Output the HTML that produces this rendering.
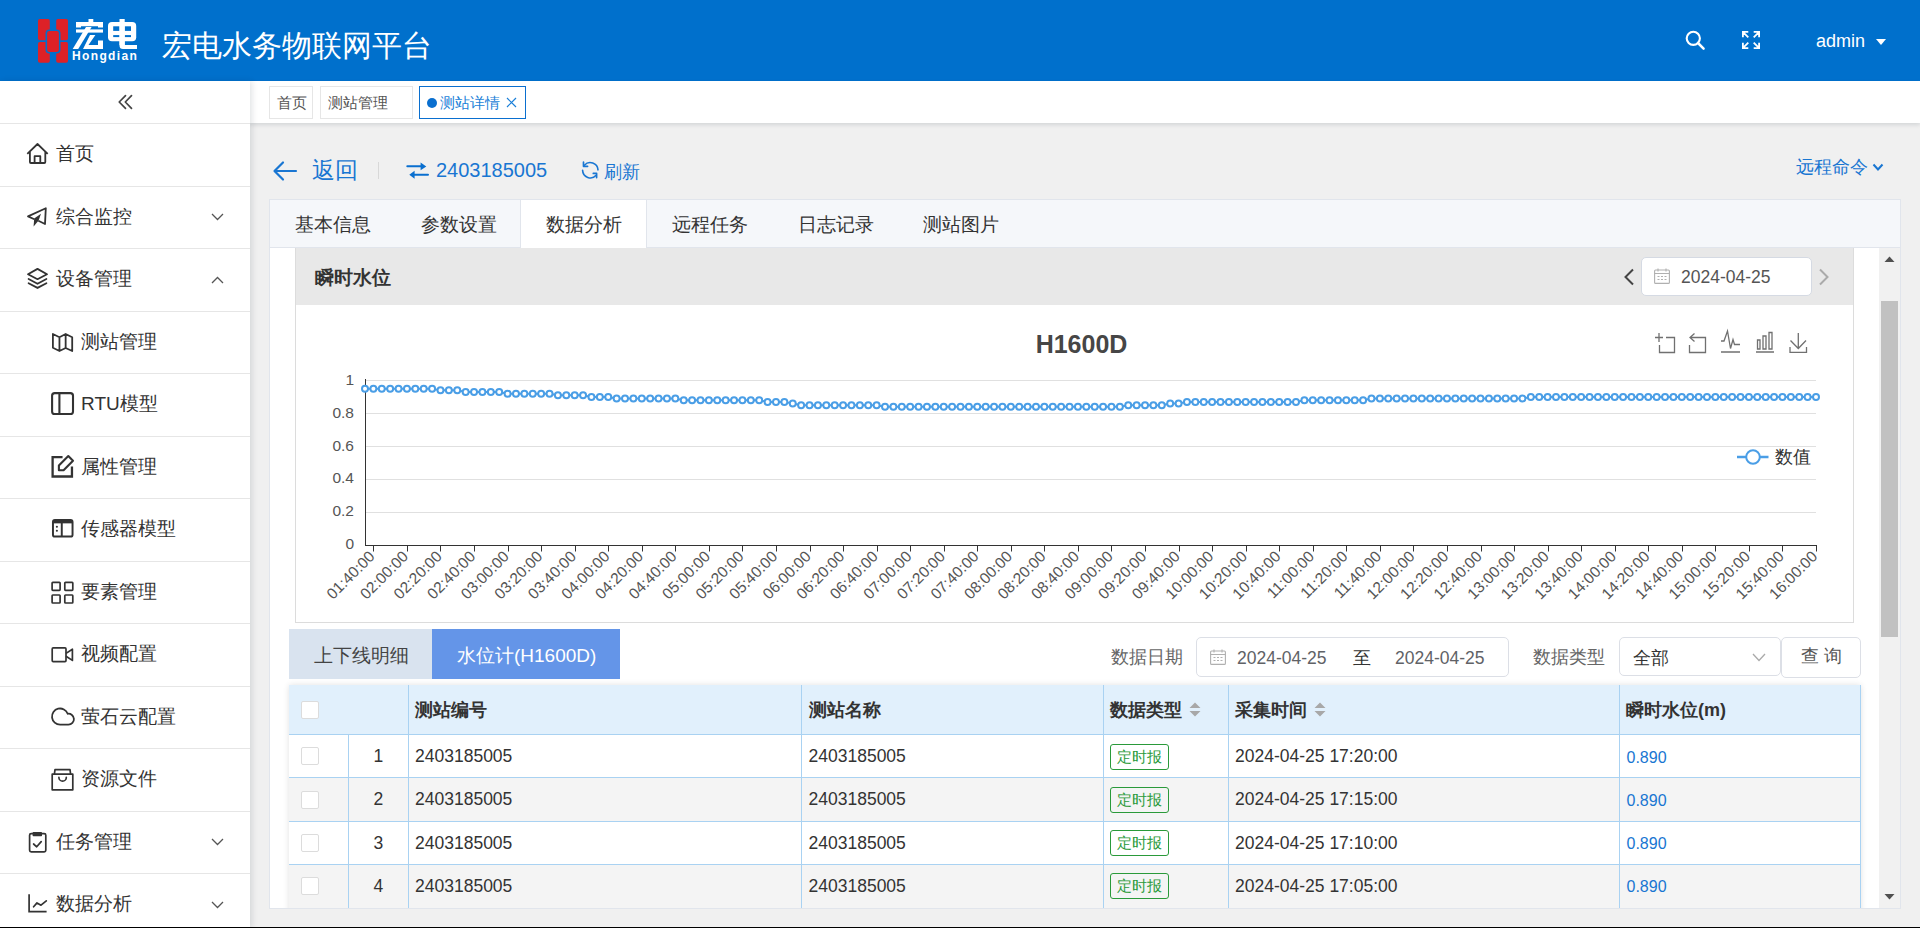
<!DOCTYPE html>
<html><head><meta charset="utf-8">
<style>
*{box-sizing:border-box;margin:0;padding:0}
html,body{width:1920px;height:928px;overflow:hidden;font-family:"Liberation Sans",sans-serif;color:#333;background:#f0f0f0}
.abs{position:absolute}
#hdr{position:absolute;left:0;top:0;width:1920px;height:81px;background:#0070cc}
#side{position:absolute;left:0;top:81px;width:250px;height:847px;background:#fff;box-shadow:2px 0 6px rgba(0,21,41,.12);z-index:3}
.mi{position:absolute;left:0;width:250px;height:62.5px;border-top:1px solid #e6e6e6;font-size:19px;color:#333}
.mi span{position:absolute;top:18px;line-height:24px;white-space:nowrap}
.mi svg{position:absolute}
#tabs{position:absolute;left:250px;top:81px;width:1670px;height:42px;background:#fff;box-shadow:0 2px 4px rgba(0,21,41,.12);z-index:2}
.tg{position:absolute;top:5px;height:33px;border:1px solid #e6e6e6;font-size:15px;line-height:31px;color:#555;padding-left:7px;white-space:nowrap}

#main{position:absolute;left:250px;top:123px;width:1670px;height:805px;background:#f0f0f0}
.blue{color:#1976d2}
#card{position:absolute;left:269px;top:199px;width:1632px;height:710px;border:1px solid #e1e5ec;background:#fff;overflow:hidden}
#thead{position:absolute;left:0;top:0;width:1630px;height:48px;background:#f5f7fa;border-bottom:1px solid #e1e5ec}
.tb{position:absolute;top:12.8px;font-size:19px;line-height:24px;color:#333;white-space:nowrap}
#scroll{position:absolute;left:0;top:48px;width:1630px;height:660px;overflow:hidden;background:#fff}
.t{position:absolute;white-space:nowrap}
</style></head><body>
<div id="hdr">
  <svg class="abs" style="left:36px;top:17px" width="104" height="48" viewBox="36 17 104 48">
    <g fill="#dd2127">
    <rect x="38" y="19" width="11.8" height="21.2" rx="1.8"/>
    <rect x="56.2" y="19" width="11.8" height="21.2" rx="1.8"/>
    <rect x="38" y="41.9" width="11.8" height="20.9" rx="1.8"/>
    <rect x="56.2" y="41.9" width="11.8" height="20.9" rx="1.8"/>
    <rect x="46.3" y="30.2" width="13.4" height="22.6" rx="3" stroke="#0070cc" stroke-width="1.6"/>
    </g>
    <g fill="#fff">
    <rect x="88.5" y="19" width="4.8" height="4.5"/>
    <path d="M76 22 H103 V27.5 H98 V26.3 H81 V27.5 H76 Z"/>
    <rect x="76" y="29.4" width="27" height="3.2"/>
    <path d="M86 27 H91.6 L78.2 49 H72.7 Z"/>
    <path d="M90 35 H95.4 L88.5 45 H103 V49 H83 Z"/>
    <rect x="98" y="40.5" width="5" height="8.5"/>
    <rect x="108" y="22" width="28.2" height="19.2" rx="4"/>
    <rect x="113.2" y="26.3" width="6.3" height="4.6" fill="#0070cc"/>
    <rect x="124.7" y="26.3" width="6.3" height="4.6" fill="#0070cc"/>
    <rect x="113.2" y="35.1" width="6.3" height="2" fill="#0070cc"/>
    <rect x="124.7" y="35.1" width="6.3" height="2" fill="#0070cc"/>
    <rect x="119.5" y="19" width="5.2" height="26"/>
    <path d="M119.5 40 V45.5 Q119.5 49 123 49 H137 V45 H124.7 V40 Z"/>
    </g>
  </svg>
  <div class="abs" style="left:72px;top:49px;font-size:12px;line-height:14px;color:#fff;letter-spacing:1.35px;font-weight:bold">Hongdian</div>
  <div class="abs" style="left:161.8px;top:26.8px;font-size:30.3px;line-height:38px;color:#fff;white-space:nowrap">宏电水务物联网平台</div>
  <svg class="abs" style="left:1685px;top:30px" width="21" height="21" viewBox="0 0 21 21"><circle cx="8.3" cy="8.3" r="6.6" fill="none" stroke="#fff" stroke-width="2.1"/><path d="M13 13 L18.6 18.6" stroke="#fff" stroke-width="2.5" stroke-linecap="round"/></svg>
  <svg class="abs" style="left:1742px;top:31px" width="18" height="18" viewBox="0 0 20 20" fill="none" stroke="#fff" stroke-width="2"><path d="M1 7V1h6M13 1h6v6M19 13v6h-6M7 19H1v-6M2 2l5 5M18 2l-5 5M18 18l-5-5M2 18l5-5"/></svg>
  <div class="abs" style="left:1816px;top:30px;font-size:18px;line-height:22px;color:#fff">admin</div>
  <svg class="abs" style="left:1876px;top:39px" width="10" height="7" viewBox="0 0 10 7"><path d="M0 0h10L5 6z" fill="#fff"/></svg>
</div>

<div id="side">
  <svg class="abs" style="left:116px;top:11px" width="20" height="18" viewBox="116 92 20 18"><path d="M125.5 95.6 L119.2 102 L125.5 108.3 M131.5 95.6 L125.3 102 L131.5 108.3" fill="none" stroke="#444" stroke-width="1.7" stroke-linecap="round" stroke-linejoin="round"/></svg>
<div class="mi" style="top:42.0px"><svg style="left:22px;top:14.2px" width="30" height="30" viewBox="22 138 30 30"><path d="M27.3 153.8 L37.5 144 L47.7 153.8 M29.9 151.3 V162 Q29.9 163 30.9 163 H44.3 Q45.3 163 45.3 162 V151.3 M34.6 163 V156.2 H40.3 V163" fill="none" stroke="#333" stroke-width="1.8" stroke-linejoin="round"/></svg><span style="left:56px">首页</span></div>
<div class="mi" style="top:104.5px"><svg style="left:22px;top:13.8px" width="30" height="30" viewBox="22 200 30 30"><path d="M34.3 219.2 L28 216.4 L45.8 208.2 L45 224 L38.4 220.7" fill="none" stroke="#333" stroke-width="1.8" stroke-linejoin="round"/><path d="M34.2 218.6 L41 213.8 L38.6 220.4 L33.6 226.6 Z" fill="#333"/></svg><span style="left:56px">综合监控</span><svg style="left:211px;top:26.5px" width="13" height="8" viewBox="0 0 13 8"><path d="M1 1 L6.5 6.5 L12 1" fill="none" stroke="#555" stroke-width="1.3"/></svg></div>
<div class="mi" style="top:167.0px"><svg style="left:22px;top:14px" width="30" height="30" viewBox="22 263 30 30"><path d="M37.5 268.9 L47 274.2 L37.5 279.2 L28 274.2 Z" fill="none" stroke="#333" stroke-width="1.8" stroke-linejoin="round"/><path d="M28.6 279 L37.5 283.7 L46.4 279 M28.6 283.2 L37.5 287.9 L46.4 283.2" fill="none" stroke="#333" stroke-width="1.8" stroke-linecap="round"/></svg><span style="left:56px">设备管理</span><svg style="left:211px;top:27px" width="13" height="8" viewBox="0 0 13 8"><path d="M1 7 L6.5 1.5 L12 7" fill="none" stroke="#555" stroke-width="1.3"/></svg></div>
<div class="mi" style="top:229.5px"><svg style="left:46px;top:15.5px" width="32" height="32" viewBox="46 326 32 32"><path d="M52.9 333 L59.45 336.2 L65.65 333 L72.2 336.2 V350 L65.65 347 L59.45 350 L52.9 346.8 Z M59.45 336.2 V350 M65.65 333 V347" fill="none" stroke="#333" stroke-width="1.8" stroke-linejoin="round"/></svg><span style="left:81px">测站管理</span></div>
<div class="mi" style="top:292.0px"><svg style="left:49.7px;top:17.4px" width="25.1" height="25.1" viewBox="0 0 24 24"><rect x="2" y="2" width="20" height="20" rx="2.5" fill="none" stroke="#333" stroke-width="2"/><path d="M9 2 V22" stroke="#333" stroke-width="2"/></svg><span style="left:81px">RTU模型</span></div>
<div class="mi" style="top:354.5px"><svg style="left:49.7px;top:17.9px" width="25.1" height="25.1" viewBox="0 0 24 24"><path d="M12 3 H2.5 V21.5 H21 V12" fill="none" stroke="#333" stroke-width="2.2"/><path d="M17.5 2 L22 6.5 L13 15.5 H8.5 V11 Z" fill="none" stroke="#333" stroke-width="2" stroke-linejoin="round"/></svg><span style="left:81px">属性管理</span></div>
<div class="mi" style="top:417.0px"><svg style="left:50.5px;top:17.5px" width="23.5" height="23.5" viewBox="0 0 24 24"><rect x="2" y="3" width="20" height="17" rx="2" fill="none" stroke="#333" stroke-width="2"/><path d="M2 5 H22" stroke="#333" stroke-width="3"/><path d="M11 4 V20" stroke="#333" stroke-width="2"/><circle cx="6" cy="10" r="1.1" fill="#333"/><circle cx="6" cy="14" r="1.1" fill="#333"/></svg><span style="left:81px">传感器模型</span></div>
<div class="mi" style="top:479.5px"><svg style="left:46px;top:15.5px" width="32" height="32" viewBox="46 576 32 32"><g fill="none" stroke="#333" stroke-width="1.7"><rect x="52.1" y="581.3" width="8" height="8" rx="0.7"/><rect x="64.8" y="581.3" width="8" height="8" rx="0.7"/><rect x="52.1" y="594" width="8" height="8" rx="0.7"/><rect x="64.8" y="594" width="8" height="8" rx="0.7"/></g></svg><span style="left:81px">要素管理</span></div>
<div class="mi" style="top:542.0px"><svg style="left:46px;top:15px" width="32" height="32" viewBox="46 638 32 32"><g fill="none" stroke="#333" stroke-width="1.7" stroke-linejoin="round"><rect x="52.2" y="646.9" width="13.8" height="13.7" rx="1"/><path d="M66 652.4 L72.4 648.2 V659.4 L66 655.2"/></g></svg><span style="left:81px">视频配置</span></div>
<div class="mi" style="top:604.5px"><svg style="left:45px;top:13.5px" width="35" height="35" viewBox="45 700 35 35"><path d="M60.1 724.7 A8.1 8.1 0 1 1 67.68 713.75 A5.5 5.5 0 1 1 68.4 724.7 Z" fill="none" stroke="#333" stroke-width="1.8" stroke-linejoin="round"/></svg><span style="left:81px">萤石云配置</span></div>
<div class="mi" style="top:667.0px"><svg style="left:46px;top:15px" width="32" height="32" viewBox="46 763 32 32"><g fill="none" stroke="#333" stroke-width="1.7" stroke-linejoin="round"><path d="M52.2 773.2 H72.8 V788.8 H52.2 Z M54.4 773.2 L55 768.6 H70 L70.6 773.2"/><path d="M58.9 776.4 A3.7 3.7 0 0 0 66.3 776.4" stroke-linecap="round"/></g></svg><span style="left:81px">资源文件</span></div>
<div class="mi" style="top:729.5px"><svg style="left:22px;top:14.5px" width="30" height="30" viewBox="22 825 30 30"><rect x="29.6" y="832.6" width="16.2" height="18.2" rx="1.6" fill="none" stroke="#333" stroke-width="1.7"/><rect x="32.6" y="831" width="9.4" height="4.3" rx="0.8" fill="#333"/><path d="M33.6 843 L36.7 845.8 L41.2 840.6" fill="none" stroke="#333" stroke-width="1.7" stroke-linecap="round" stroke-linejoin="round"/></svg><span style="left:56px">任务管理</span><svg style="left:211px;top:26.5px" width="13" height="8" viewBox="0 0 13 8"><path d="M1 1 L6.5 6.5 L12 1" fill="none" stroke="#555" stroke-width="1.3"/></svg></div>
<div class="mi" style="top:792.0px"><svg style="left:22px;top:13.7px" width="30" height="30" viewBox="22 888 30 30"><path d="M29.1 894.2 V911.6 H46.6" fill="none" stroke="#333" stroke-width="1.7"/><path d="M33.6 906.8 L37 902.9 L41 905.2 L46.3 900.8" fill="none" stroke="#333" stroke-width="1.7" stroke-linecap="round" stroke-linejoin="round"/></svg><span style="left:56px">数据分析</span><svg style="left:211px;top:26.5px" width="13" height="8" viewBox="0 0 13 8"><path d="M1 1 L6.5 6.5 L12 1" fill="none" stroke="#555" stroke-width="1.3"/></svg></div>
</div>

<div id="tabs">
<div class="tg" style="left:19px;width:44px">首页</div>
  <div class="tg" style="left:70px;width:93px">测站管理</div>
  <div class="tg" style="left:169px;width:107px;border:1.6px solid #0a6fcf;color:#1a7fd8;padding-left:0">
    <div class="abs" style="left:7px;top:10.5px;width:10px;height:10px;border-radius:50%;background:#0a6fcf"></div>
    <span class="abs" style="left:19.5px;top:0">测站详情</span>
    <svg class="abs" style="left:86px;top:9.5px" width="11" height="11" viewBox="0 0 11 11"><path d="M1 1 L10 10 M10 1 L1 10" stroke="#1a7fd8" stroke-width="1.2"/></svg>
  </div>
</div>


<div id="main"></div>
<svg class="abs" style="left:272px;top:160px" width="26" height="22" viewBox="0 0 26 22"><path d="M24 11 H3 M11 2.5 L2.5 11 L11 19.5" fill="none" stroke="#1976d2" stroke-width="2.2" stroke-linecap="round" stroke-linejoin="round"/></svg>
<div class="t blue" style="left:312px;top:155px;font-size:23px;line-height:30px">返回</div>
<div class="abs" style="left:378px;top:162px;width:1px;height:17px;background:#d8d8d8"></div>
<svg class="abs" style="left:404px;top:158px" width="28" height="26" viewBox="404 158 28 26"><path d="M407.3 166.3 H421.5 M414 174.8 H428" stroke="#0a6fcf" stroke-width="2" stroke-linecap="round"/><path d="M420.6 162.5 L426.3 166.4 L420.6 170.2 Z M414.6 170.8 L409.3 174.7 L414.6 178.8 Z" fill="#0a6fcf"/></svg>
<div class="t blue" style="left:436px;top:158px;font-size:20px;line-height:24px">2403185005</div>
<svg class="abs" style="left:578px;top:158px" width="24" height="24" viewBox="578 158 24 24"><path d="M598 169.9 A7.8 7.8 0 0 0 584.4 165.2 M582.6 170.4 A7.8 7.8 0 0 0 596.2 175.3" fill="none" stroke="#1976d2" stroke-width="1.6" stroke-linecap="round"/><path d="M583.5 162.2 V166.3 H587.6 M593.3 173.4 H596.6 V177.6" fill="none" stroke="#1976d2" stroke-width="1.7" stroke-linecap="round" stroke-linejoin="round"/></svg>
<div class="t blue" style="left:604px;top:160px;font-size:18px;line-height:24px">刷新</div>
<div class="t blue" style="left:1796px;top:155px;font-size:18px;line-height:24px">远程命令</div>
<svg class="abs" style="left:1872px;top:163px" width="12" height="9" viewBox="0 0 12 9"><path d="M1.5 1.5 L6 6.5 L10.5 1.5" fill="none" stroke="#1976d2" stroke-width="2"/></svg>

<div id="card">
  <div id="thead">
    <div class="abs" style="left:250px;top:0;width:127px;height:49px;background:#fff;border-left:1px solid #e1e5ec;border-right:1px solid #e1e5ec"></div>
    <div class="tb" style="left:25px">基本信息</div>
    <div class="tb" style="left:151px">参数设置</div>
    <div class="tb" style="left:276px">数据分析</div>
    <div class="tb" style="left:402px">远程任务</div>
    <div class="tb" style="left:528px">日志记录</div>
    <div class="tb" style="left:653px">测站图片</div>
  </div>
  <div id="scroll">
    <div class="abs" style="left:25px;top:0;width:1559px;height:375px;border:1px solid #dcdcdc;border-top:0;background:#fff"></div>
<div class="abs" style="left:25px;top:0;width:1559px;height:57px;background:#e8e8e8;border-left:1px solid #dcdcdc;border-right:1px solid #dcdcdc"></div>
<div class="t" style="left:45px;top:18px;font-size:19px;line-height:24px;font-weight:bold;color:#333">瞬时水位</div>
<svg class="abs" style="left:1352px;top:20px" width="14" height="18" viewBox="0 0 14 18"><path d="M11 1.5 L3.5 9 L11 16.5" fill="none" stroke="#444" stroke-width="2"/></svg>
<div class="abs" style="left:1371px;top:8.5px;width:170.5px;height:39px;background:#fff;border:1px solid #d5dae3;border-radius:5px"></div>
<svg class="abs" style="left:1384px;top:20px" width="16" height="16" viewBox="0 0 16 16" fill="none" stroke="#b0b0b0" stroke-width="1.1"><rect x="0.6" y="2" width="14.8" height="13.4" rx="1"/><path d="M0.6 5.5 H15.4 M4 0.5 V3.5 M12 0.5 V3.5"/><path d="M3.5 8.5h2M7 8.5h2M10.5 8.5h2M3.5 11.5h2M7 11.5h2M10.5 11.5h2" stroke-width="1"/></svg>
<div class="t" style="left:1411px;top:17.5px;font-size:17.5px;line-height:22px;color:#555">2024-04-25</div>
<svg class="abs" style="left:1547px;top:20px" width="14" height="18" viewBox="0 0 14 18"><path d="M3 1.5 L10.5 9 L3 16.5" fill="none" stroke="#aaa" stroke-width="2"/></svg>

<!-- sub tabs -->
<div class="abs" style="left:19px;top:381px;width:143px;height:50px;background:#d9e3ef"></div>
<div class="t" style="left:44px;top:396px;font-size:19px;line-height:24px;color:#444">上下线明细</div>
<div class="abs" style="left:162px;top:381px;width:188px;height:50px;background:#6495e8"></div>
<div class="t" style="left:187px;top:396px;font-size:19px;line-height:24px;color:#fff">水位计(H1600D)</div>

<div class="t" style="left:841px;top:398px;font-size:18px;line-height:22px;color:#666">数据日期</div>
<div class="abs" style="left:926px;top:389px;width:313px;height:40px;border:1px solid #dcdfe6;border-radius:5px;background:#fff"></div>
<svg class="abs" style="left:940px;top:401px" width="16" height="16" viewBox="0 0 16 16" fill="none" stroke="#b0b0b0" stroke-width="1.1"><rect x="0.6" y="2" width="14.8" height="13.4" rx="1"/><path d="M0.6 5.5 H15.4 M4 0.5 V3.5 M12 0.5 V3.5"/><path d="M3.5 8.5h2M7 8.5h2M10.5 8.5h2M3.5 11.5h2M7 11.5h2M10.5 11.5h2" stroke-width="1"/></svg>
<div class="t" style="left:967px;top:398.5px;font-size:17.5px;line-height:22px;color:#606266">2024-04-25</div>
<div class="t" style="left:1082.5px;top:399px;font-size:18px;line-height:22px;color:#333">至</div>
<div class="t" style="left:1125px;top:398.5px;font-size:17.5px;line-height:22px;color:#606266">2024-04-25</div>
<div class="t" style="left:1263px;top:398px;font-size:18px;line-height:22px;color:#666">数据类型</div>
<div class="abs" style="left:1349px;top:389px;width:162px;height:39px;border:1px solid #dcdfe6;border-radius:5px;background:#fff"></div>
<div class="t" style="left:1362.5px;top:399px;font-size:18px;line-height:22px;color:#333">全部</div>
<svg class="abs" style="left:1482px;top:405px" width="14" height="9" viewBox="0 0 14 9"><path d="M1 1 L7 7.5 L13 1" fill="none" stroke="#aaa" stroke-width="1.3"/></svg>
<div class="abs" style="left:1511px;top:389px;width:80px;height:41px;border:1px solid #dcdfe6;border-radius:5px;background:#fff"></div>
<div class="t" style="left:1531px;top:397px;font-size:18px;line-height:22px;color:#555">查 询</div>

<!-- table -->
<div id="tbl" class="abs" style="left:19px;top:437px;width:1572px;height:240px;box-shadow:0 0 6px rgba(0,0,0,.12);background:#fff;overflow:hidden">
<div class="abs" style="left:0;top:0;width:1572px;height:50px;background:#e1f0fc;border-bottom:1px solid #a9d2f2"></div>
<div class="abs" style="left:0;top:50.0px;width:1572px;height:43.3px;background:#fff;border-bottom:1px solid #a9d2f2"></div>
<div class="abs" style="left:0;top:93.3px;width:1572px;height:43.3px;background:#f4f4f4;border-bottom:1px solid #a9d2f2"></div>
<div class="abs" style="left:0;top:136.6px;width:1572px;height:43.3px;background:#fff;border-bottom:1px solid #a9d2f2"></div>
<div class="abs" style="left:0;top:179.9px;width:1572px;height:60px;background:#f4f4f4"></div>
<div class="abs" style="left:59.0px;top:50px;width:1px;height:240px;background:#a9d2f2"></div>
<div class="abs" style="left:119.0px;top:0px;width:1px;height:240px;background:#a9d2f2"></div>
<div class="abs" style="left:512.0px;top:0px;width:1px;height:240px;background:#a9d2f2"></div>
<div class="abs" style="left:814.0px;top:0px;width:1px;height:240px;background:#a9d2f2"></div>
<div class="abs" style="left:939.0px;top:0px;width:1px;height:240px;background:#a9d2f2"></div>
<div class="abs" style="left:1330.0px;top:0px;width:1px;height:240px;background:#a9d2f2"></div>
<div class="abs" style="left:1571px;top:0;width:1px;height:240px;background:#a9d2f2"></div>
<div class="abs" style="left:12px;top:16px;width:18px;height:18px;background:#fff;border:1px solid #dcdcdc;border-radius:2px"></div>
<div class="t" style="left:126px;top:13px;font-size:18px;line-height:24px;font-weight:bold;color:#333">测站编号</div>
<div class="t" style="left:520px;top:13px;font-size:18px;line-height:24px;font-weight:bold;color:#333">测站名称</div>
<div class="t" style="left:821px;top:13px;font-size:18px;line-height:24px;font-weight:bold;color:#333">数据类型</div>
<div class="t" style="left:946px;top:13px;font-size:18px;line-height:24px;font-weight:bold;color:#333">采集时间</div>
<div class="t" style="left:1337px;top:13px;font-size:18px;line-height:24px;font-weight:bold;color:#333">瞬时水位(m)</div>
<svg class="abs" style="left:900px;top:17px" width="12" height="15" viewBox="0 0 12 15"><path d="M6 0.5 L11.5 6 H0.5 Z M0.5 9 H11.5 L6 14.5 Z" fill="#a8a8a8"/></svg>
<svg class="abs" style="left:1024.5px;top:17px" width="12" height="15" viewBox="0 0 12 15"><path d="M6 0.5 L11.5 6 H0.5 Z M0.5 9 H11.5 L6 14.5 Z" fill="#a8a8a8"/></svg>
<div class="abs" style="left:12px;top:62px;width:18px;height:18px;background:#fff;border:1px solid #dcdcdc;border-radius:2px"></div>
<div class="t" style="left:84.5px;top:60.0px;font-size:17.5px;line-height:22px;color:#333">1</div>
<div class="t" style="left:126px;top:60.0px;font-size:17.5px;line-height:22px;color:#333">2403185005</div>
<div class="t" style="left:519.5px;top:60.0px;font-size:17.5px;line-height:22px;color:#333">2403185005</div>
<div class="abs" style="left:821px;top:58.5px;width:59px;height:26px;border:1px solid #2a9a3a;border-radius:3px;font-size:14.5px;line-height:24px;color:#2a9a3a;text-align:center">定时报</div>
<div class="t" style="left:946px;top:60.0px;font-size:17.5px;line-height:22px;color:#333">2024-04-25 17:20:00</div>
<div class="t" style="left:1337.5px;top:62.5px;font-size:16px;line-height:20px;color:#1976d2">0.890</div>
<div class="abs" style="left:12px;top:106px;width:18px;height:18px;background:#fff;border:1px solid #dcdcdc;border-radius:2px"></div>
<div class="t" style="left:84.5px;top:103.3px;font-size:17.5px;line-height:22px;color:#333">2</div>
<div class="t" style="left:126px;top:103.3px;font-size:17.5px;line-height:22px;color:#333">2403185005</div>
<div class="t" style="left:519.5px;top:103.3px;font-size:17.5px;line-height:22px;color:#333">2403185005</div>
<div class="abs" style="left:821px;top:101.8px;width:59px;height:26px;border:1px solid #2a9a3a;border-radius:3px;font-size:14.5px;line-height:24px;color:#2a9a3a;text-align:center">定时报</div>
<div class="t" style="left:946px;top:103.3px;font-size:17.5px;line-height:22px;color:#333">2024-04-25 17:15:00</div>
<div class="t" style="left:1337.5px;top:105.8px;font-size:16px;line-height:20px;color:#1976d2">0.890</div>
<div class="abs" style="left:12px;top:149px;width:18px;height:18px;background:#fff;border:1px solid #dcdcdc;border-radius:2px"></div>
<div class="t" style="left:84.5px;top:146.6px;font-size:17.5px;line-height:22px;color:#333">3</div>
<div class="t" style="left:126px;top:146.6px;font-size:17.5px;line-height:22px;color:#333">2403185005</div>
<div class="t" style="left:519.5px;top:146.6px;font-size:17.5px;line-height:22px;color:#333">2403185005</div>
<div class="abs" style="left:821px;top:145.1px;width:59px;height:26px;border:1px solid #2a9a3a;border-radius:3px;font-size:14.5px;line-height:24px;color:#2a9a3a;text-align:center">定时报</div>
<div class="t" style="left:946px;top:146.6px;font-size:17.5px;line-height:22px;color:#333">2024-04-25 17:10:00</div>
<div class="t" style="left:1337.5px;top:149.1px;font-size:16px;line-height:20px;color:#1976d2">0.890</div>
<div class="abs" style="left:12px;top:192px;width:18px;height:18px;background:#fff;border:1px solid #dcdcdc;border-radius:2px"></div>
<div class="t" style="left:84.5px;top:189.9px;font-size:17.5px;line-height:22px;color:#333">4</div>
<div class="t" style="left:126px;top:189.9px;font-size:17.5px;line-height:22px;color:#333">2403185005</div>
<div class="t" style="left:519.5px;top:189.9px;font-size:17.5px;line-height:22px;color:#333">2403185005</div>
<div class="abs" style="left:821px;top:188.4px;width:59px;height:26px;border:1px solid #2a9a3a;border-radius:3px;font-size:14.5px;line-height:24px;color:#2a9a3a;text-align:center">定时报</div>
<div class="t" style="left:946px;top:189.9px;font-size:17.5px;line-height:22px;color:#333">2024-04-25 17:05:00</div>
<div class="t" style="left:1337.5px;top:192.4px;font-size:16px;line-height:20px;color:#1976d2">0.890</div>
</div>

<!-- scrollbar -->
<div class="abs" style="left:1609px;top:0;width:21px;height:660px;background:#f1f1f1"></div>
<svg class="abs" style="left:1614px;top:8px" width="11" height="7" viewBox="0 0 11 7"><path d="M0.5 6 L5.5 0.5 L10.5 6 Z" fill="#505050"/></svg>
<div class="abs" style="left:1611px;top:53px;width:17px;height:336px;background:#c1c1c1"></div>
<svg class="abs" style="left:1614px;top:645px" width="11" height="7" viewBox="0 0 11 7"><path d="M0.5 1 L5.5 6.5 L10.5 1 Z" fill="#505050"/></svg>

  </div>
</div>
<div class="abs" style="left:0;top:927px;width:1920px;height:1px;background:#000;z-index:9"></div>
<!--CHART-->
<svg class="abs" style="left:296px;top:305px" width="1557" height="317" viewBox="296 305 1557 317">
<text x="1081.5" y="353" text-anchor="middle" font-family="Liberation Sans" font-weight="bold" font-size="25" fill="#464646">H1600D</text>
<line x1="365" x2="1816" y1="512.5" y2="512.5" stroke="#e0e0e0" stroke-width="1"/>
<line x1="365" x2="1816" y1="479.5" y2="479.5" stroke="#e0e0e0" stroke-width="1"/>
<line x1="365" x2="1816" y1="446.5" y2="446.5" stroke="#e0e0e0" stroke-width="1"/>
<line x1="365" x2="1816" y1="413.5" y2="413.5" stroke="#e0e0e0" stroke-width="1"/>
<line x1="365" x2="1816" y1="380.5" y2="380.5" stroke="#e0e0e0" stroke-width="1"/>
<text x="354" y="549.2" text-anchor="end" font-family="Liberation Sans" font-size="15.5" fill="#555">0</text>
<text x="354" y="516.3" text-anchor="end" font-family="Liberation Sans" font-size="15.5" fill="#555">0.2</text>
<text x="354" y="483.4" text-anchor="end" font-family="Liberation Sans" font-size="15.5" fill="#555">0.4</text>
<text x="354" y="450.5" text-anchor="end" font-family="Liberation Sans" font-size="15.5" fill="#555">0.6</text>
<text x="354" y="417.6" text-anchor="end" font-family="Liberation Sans" font-size="15.5" fill="#555">0.8</text>
<text x="354" y="384.7" text-anchor="end" font-family="Liberation Sans" font-size="15.5" fill="#555">1</text>
<line x1="365.5" x2="365.5" y1="379" y2="546" stroke="#333" stroke-width="1"/>
<line x1="365" x2="1817" y1="545.5" y2="545.5" stroke="#333" stroke-width="1"/>
<line x1="373.5" x2="373.5" y1="545" y2="551.5" stroke="#333" stroke-width="1"/>
<text x="371.8" y="553.6" transform="rotate(-45 371.8 553.6)" text-anchor="end" dominant-baseline="central" font-family="Liberation Sans" font-size="15.5" fill="#555">01:40:00</text>
<line x1="407.5" x2="407.5" y1="545" y2="551.5" stroke="#333" stroke-width="1"/>
<text x="405.3" y="553.6" transform="rotate(-45 405.3 553.6)" text-anchor="end" dominant-baseline="central" font-family="Liberation Sans" font-size="15.5" fill="#555">02:00:00</text>
<line x1="440.5" x2="440.5" y1="545" y2="551.5" stroke="#333" stroke-width="1"/>
<text x="438.9" y="553.6" transform="rotate(-45 438.9 553.6)" text-anchor="end" dominant-baseline="central" font-family="Liberation Sans" font-size="15.5" fill="#555">02:20:00</text>
<line x1="474.5" x2="474.5" y1="545" y2="551.5" stroke="#333" stroke-width="1"/>
<text x="472.4" y="553.6" transform="rotate(-45 472.4 553.6)" text-anchor="end" dominant-baseline="central" font-family="Liberation Sans" font-size="15.5" fill="#555">02:40:00</text>
<line x1="508.5" x2="508.5" y1="545" y2="551.5" stroke="#333" stroke-width="1"/>
<text x="506.0" y="553.6" transform="rotate(-45 506.0 553.6)" text-anchor="end" dominant-baseline="central" font-family="Liberation Sans" font-size="15.5" fill="#555">03:00:00</text>
<line x1="541.5" x2="541.5" y1="545" y2="551.5" stroke="#333" stroke-width="1"/>
<text x="539.5" y="553.6" transform="rotate(-45 539.5 553.6)" text-anchor="end" dominant-baseline="central" font-family="Liberation Sans" font-size="15.5" fill="#555">03:20:00</text>
<line x1="575.5" x2="575.5" y1="545" y2="551.5" stroke="#333" stroke-width="1"/>
<text x="573.1" y="553.6" transform="rotate(-45 573.1 553.6)" text-anchor="end" dominant-baseline="central" font-family="Liberation Sans" font-size="15.5" fill="#555">03:40:00</text>
<line x1="608.5" x2="608.5" y1="545" y2="551.5" stroke="#333" stroke-width="1"/>
<text x="606.6" y="553.6" transform="rotate(-45 606.6 553.6)" text-anchor="end" dominant-baseline="central" font-family="Liberation Sans" font-size="15.5" fill="#555">04:00:00</text>
<line x1="642.5" x2="642.5" y1="545" y2="551.5" stroke="#333" stroke-width="1"/>
<text x="640.2" y="553.6" transform="rotate(-45 640.2 553.6)" text-anchor="end" dominant-baseline="central" font-family="Liberation Sans" font-size="15.5" fill="#555">04:20:00</text>
<line x1="675.5" x2="675.5" y1="545" y2="551.5" stroke="#333" stroke-width="1"/>
<text x="673.7" y="553.6" transform="rotate(-45 673.7 553.6)" text-anchor="end" dominant-baseline="central" font-family="Liberation Sans" font-size="15.5" fill="#555">04:40:00</text>
<line x1="709.5" x2="709.5" y1="545" y2="551.5" stroke="#333" stroke-width="1"/>
<text x="707.3" y="553.6" transform="rotate(-45 707.3 553.6)" text-anchor="end" dominant-baseline="central" font-family="Liberation Sans" font-size="15.5" fill="#555">05:00:00</text>
<line x1="742.5" x2="742.5" y1="545" y2="551.5" stroke="#333" stroke-width="1"/>
<text x="740.8" y="553.6" transform="rotate(-45 740.8 553.6)" text-anchor="end" dominant-baseline="central" font-family="Liberation Sans" font-size="15.5" fill="#555">05:20:00</text>
<line x1="776.5" x2="776.5" y1="545" y2="551.5" stroke="#333" stroke-width="1"/>
<text x="774.4" y="553.6" transform="rotate(-45 774.4 553.6)" text-anchor="end" dominant-baseline="central" font-family="Liberation Sans" font-size="15.5" fill="#555">05:40:00</text>
<line x1="810.5" x2="810.5" y1="545" y2="551.5" stroke="#333" stroke-width="1"/>
<text x="807.9" y="553.6" transform="rotate(-45 807.9 553.6)" text-anchor="end" dominant-baseline="central" font-family="Liberation Sans" font-size="15.5" fill="#555">06:00:00</text>
<line x1="843.5" x2="843.5" y1="545" y2="551.5" stroke="#333" stroke-width="1"/>
<text x="841.5" y="553.6" transform="rotate(-45 841.5 553.6)" text-anchor="end" dominant-baseline="central" font-family="Liberation Sans" font-size="15.5" fill="#555">06:20:00</text>
<line x1="877.5" x2="877.5" y1="545" y2="551.5" stroke="#333" stroke-width="1"/>
<text x="875.0" y="553.6" transform="rotate(-45 875.0 553.6)" text-anchor="end" dominant-baseline="central" font-family="Liberation Sans" font-size="15.5" fill="#555">06:40:00</text>
<line x1="910.5" x2="910.5" y1="545" y2="551.5" stroke="#333" stroke-width="1"/>
<text x="908.6" y="553.6" transform="rotate(-45 908.6 553.6)" text-anchor="end" dominant-baseline="central" font-family="Liberation Sans" font-size="15.5" fill="#555">07:00:00</text>
<line x1="944.5" x2="944.5" y1="545" y2="551.5" stroke="#333" stroke-width="1"/>
<text x="942.1" y="553.6" transform="rotate(-45 942.1 553.6)" text-anchor="end" dominant-baseline="central" font-family="Liberation Sans" font-size="15.5" fill="#555">07:20:00</text>
<line x1="977.5" x2="977.5" y1="545" y2="551.5" stroke="#333" stroke-width="1"/>
<text x="975.7" y="553.6" transform="rotate(-45 975.7 553.6)" text-anchor="end" dominant-baseline="central" font-family="Liberation Sans" font-size="15.5" fill="#555">07:40:00</text>
<line x1="1011.5" x2="1011.5" y1="545" y2="551.5" stroke="#333" stroke-width="1"/>
<text x="1009.2" y="553.6" transform="rotate(-45 1009.2 553.6)" text-anchor="end" dominant-baseline="central" font-family="Liberation Sans" font-size="15.5" fill="#555">08:00:00</text>
<line x1="1044.5" x2="1044.5" y1="545" y2="551.5" stroke="#333" stroke-width="1"/>
<text x="1042.8" y="553.6" transform="rotate(-45 1042.8 553.6)" text-anchor="end" dominant-baseline="central" font-family="Liberation Sans" font-size="15.5" fill="#555">08:20:00</text>
<line x1="1078.5" x2="1078.5" y1="545" y2="551.5" stroke="#333" stroke-width="1"/>
<text x="1076.3" y="553.6" transform="rotate(-45 1076.3 553.6)" text-anchor="end" dominant-baseline="central" font-family="Liberation Sans" font-size="15.5" fill="#555">08:40:00</text>
<line x1="1111.5" x2="1111.5" y1="545" y2="551.5" stroke="#333" stroke-width="1"/>
<text x="1109.9" y="553.6" transform="rotate(-45 1109.9 553.6)" text-anchor="end" dominant-baseline="central" font-family="Liberation Sans" font-size="15.5" fill="#555">09:00:00</text>
<line x1="1145.5" x2="1145.5" y1="545" y2="551.5" stroke="#333" stroke-width="1"/>
<text x="1143.4" y="553.6" transform="rotate(-45 1143.4 553.6)" text-anchor="end" dominant-baseline="central" font-family="Liberation Sans" font-size="15.5" fill="#555">09:20:00</text>
<line x1="1179.5" x2="1179.5" y1="545" y2="551.5" stroke="#333" stroke-width="1"/>
<text x="1177.0" y="553.6" transform="rotate(-45 1177.0 553.6)" text-anchor="end" dominant-baseline="central" font-family="Liberation Sans" font-size="15.5" fill="#555">09:40:00</text>
<line x1="1212.5" x2="1212.5" y1="545" y2="551.5" stroke="#333" stroke-width="1"/>
<text x="1210.5" y="553.6" transform="rotate(-45 1210.5 553.6)" text-anchor="end" dominant-baseline="central" font-family="Liberation Sans" font-size="15.5" fill="#555">10:00:00</text>
<line x1="1246.5" x2="1246.5" y1="545" y2="551.5" stroke="#333" stroke-width="1"/>
<text x="1244.1" y="553.6" transform="rotate(-45 1244.1 553.6)" text-anchor="end" dominant-baseline="central" font-family="Liberation Sans" font-size="15.5" fill="#555">10:20:00</text>
<line x1="1279.5" x2="1279.5" y1="545" y2="551.5" stroke="#333" stroke-width="1"/>
<text x="1277.6" y="553.6" transform="rotate(-45 1277.6 553.6)" text-anchor="end" dominant-baseline="central" font-family="Liberation Sans" font-size="15.5" fill="#555">10:40:00</text>
<line x1="1313.5" x2="1313.5" y1="545" y2="551.5" stroke="#333" stroke-width="1"/>
<text x="1311.2" y="553.6" transform="rotate(-45 1311.2 553.6)" text-anchor="end" dominant-baseline="central" font-family="Liberation Sans" font-size="15.5" fill="#555">11:00:00</text>
<line x1="1346.5" x2="1346.5" y1="545" y2="551.5" stroke="#333" stroke-width="1"/>
<text x="1344.7" y="553.6" transform="rotate(-45 1344.7 553.6)" text-anchor="end" dominant-baseline="central" font-family="Liberation Sans" font-size="15.5" fill="#555">11:20:00</text>
<line x1="1380.5" x2="1380.5" y1="545" y2="551.5" stroke="#333" stroke-width="1"/>
<text x="1378.3" y="553.6" transform="rotate(-45 1378.3 553.6)" text-anchor="end" dominant-baseline="central" font-family="Liberation Sans" font-size="15.5" fill="#555">11:40:00</text>
<line x1="1413.5" x2="1413.5" y1="545" y2="551.5" stroke="#333" stroke-width="1"/>
<text x="1411.8" y="553.6" transform="rotate(-45 1411.8 553.6)" text-anchor="end" dominant-baseline="central" font-family="Liberation Sans" font-size="15.5" fill="#555">12:00:00</text>
<line x1="1447.5" x2="1447.5" y1="545" y2="551.5" stroke="#333" stroke-width="1"/>
<text x="1445.4" y="553.6" transform="rotate(-45 1445.4 553.6)" text-anchor="end" dominant-baseline="central" font-family="Liberation Sans" font-size="15.5" fill="#555">12:20:00</text>
<line x1="1481.5" x2="1481.5" y1="545" y2="551.5" stroke="#333" stroke-width="1"/>
<text x="1478.9" y="553.6" transform="rotate(-45 1478.9 553.6)" text-anchor="end" dominant-baseline="central" font-family="Liberation Sans" font-size="15.5" fill="#555">12:40:00</text>
<line x1="1514.5" x2="1514.5" y1="545" y2="551.5" stroke="#333" stroke-width="1"/>
<text x="1512.5" y="553.6" transform="rotate(-45 1512.5 553.6)" text-anchor="end" dominant-baseline="central" font-family="Liberation Sans" font-size="15.5" fill="#555">13:00:00</text>
<line x1="1548.5" x2="1548.5" y1="545" y2="551.5" stroke="#333" stroke-width="1"/>
<text x="1546.0" y="553.6" transform="rotate(-45 1546.0 553.6)" text-anchor="end" dominant-baseline="central" font-family="Liberation Sans" font-size="15.5" fill="#555">13:20:00</text>
<line x1="1581.5" x2="1581.5" y1="545" y2="551.5" stroke="#333" stroke-width="1"/>
<text x="1579.6" y="553.6" transform="rotate(-45 1579.6 553.6)" text-anchor="end" dominant-baseline="central" font-family="Liberation Sans" font-size="15.5" fill="#555">13:40:00</text>
<line x1="1615.5" x2="1615.5" y1="545" y2="551.5" stroke="#333" stroke-width="1"/>
<text x="1613.1" y="553.6" transform="rotate(-45 1613.1 553.6)" text-anchor="end" dominant-baseline="central" font-family="Liberation Sans" font-size="15.5" fill="#555">14:00:00</text>
<line x1="1648.5" x2="1648.5" y1="545" y2="551.5" stroke="#333" stroke-width="1"/>
<text x="1646.7" y="553.6" transform="rotate(-45 1646.7 553.6)" text-anchor="end" dominant-baseline="central" font-family="Liberation Sans" font-size="15.5" fill="#555">14:20:00</text>
<line x1="1682.5" x2="1682.5" y1="545" y2="551.5" stroke="#333" stroke-width="1"/>
<text x="1680.2" y="553.6" transform="rotate(-45 1680.2 553.6)" text-anchor="end" dominant-baseline="central" font-family="Liberation Sans" font-size="15.5" fill="#555">14:40:00</text>
<line x1="1715.5" x2="1715.5" y1="545" y2="551.5" stroke="#333" stroke-width="1"/>
<text x="1713.8" y="553.6" transform="rotate(-45 1713.8 553.6)" text-anchor="end" dominant-baseline="central" font-family="Liberation Sans" font-size="15.5" fill="#555">15:00:00</text>
<line x1="1749.5" x2="1749.5" y1="545" y2="551.5" stroke="#333" stroke-width="1"/>
<text x="1747.3" y="553.6" transform="rotate(-45 1747.3 553.6)" text-anchor="end" dominant-baseline="central" font-family="Liberation Sans" font-size="15.5" fill="#555">15:20:00</text>
<line x1="1782.5" x2="1782.5" y1="545" y2="551.5" stroke="#333" stroke-width="1"/>
<text x="1780.9" y="553.6" transform="rotate(-45 1780.9 553.6)" text-anchor="end" dominant-baseline="central" font-family="Liberation Sans" font-size="15.5" fill="#555">15:40:00</text>
<line x1="1816.5" x2="1816.5" y1="545" y2="551.5" stroke="#333" stroke-width="1"/>
<text x="1814.4" y="553.6" transform="rotate(-45 1814.4 553.6)" text-anchor="end" dominant-baseline="central" font-family="Liberation Sans" font-size="15.5" fill="#555">16:00:00</text>
<polyline points="365.00,388.73 373.39,388.73 381.77,388.73 390.16,388.73 398.55,388.73 406.94,388.73 415.32,388.73 423.71,388.73 432.10,388.73 440.49,390.37 448.87,390.37 457.26,390.37 465.65,392.01 474.03,392.01 482.42,392.01 490.81,392.01 499.20,392.01 507.58,393.66 515.97,393.66 524.36,393.66 532.75,393.66 541.13,393.66 549.52,393.66 557.91,395.31 566.29,395.31 574.68,395.31 583.07,395.31 591.46,396.95 599.84,396.95 608.23,396.95 616.62,398.60 625.01,398.60 633.39,398.60 641.78,398.60 650.17,398.60 658.55,398.60 666.94,398.60 675.33,398.60 683.72,400.24 692.10,400.24 700.49,400.24 708.88,400.24 717.27,400.24 725.65,400.24 734.04,400.24 742.43,400.24 750.82,400.24 759.20,400.24 767.59,401.88 775.98,401.88 784.36,401.88 792.75,403.53 801.14,405.18 809.53,405.18 817.91,405.18 826.30,405.18 834.69,405.18 843.08,405.18 851.46,405.18 859.85,405.18 868.24,405.18 876.62,405.18 885.01,406.82 893.40,406.82 901.79,406.82 910.17,406.82 918.56,406.82 926.95,406.82 935.34,406.82 943.72,406.82 952.11,406.82 960.50,406.82 968.88,406.82 977.27,406.82 985.66,406.82 994.05,406.82 1002.43,406.82 1010.82,406.82 1019.21,406.82 1027.60,406.82 1035.98,406.82 1044.37,406.82 1052.76,406.82 1061.14,406.82 1069.53,406.82 1077.92,406.82 1086.31,406.82 1094.69,406.82 1103.08,406.82 1111.47,406.82 1119.86,406.82 1128.24,405.18 1136.63,405.18 1145.02,405.18 1153.40,405.18 1161.79,405.18 1170.18,403.53 1178.57,403.53 1186.95,401.88 1195.34,401.88 1203.73,401.88 1212.12,401.88 1220.50,401.88 1228.89,401.88 1237.28,401.88 1245.66,401.88 1254.05,401.88 1262.44,401.88 1270.83,401.88 1279.21,401.88 1287.60,401.88 1295.99,401.88 1304.38,400.24 1312.76,400.24 1321.15,400.24 1329.54,400.24 1337.92,400.24 1346.31,400.24 1354.70,400.24 1363.09,400.24 1371.47,398.60 1379.86,398.60 1388.25,398.60 1396.64,398.60 1405.02,398.60 1413.41,398.60 1421.80,398.60 1430.18,398.60 1438.57,398.60 1446.96,398.60 1455.35,398.60 1463.73,398.60 1472.12,398.60 1480.51,398.60 1488.90,398.60 1497.28,398.60 1505.67,398.60 1514.06,398.60 1522.45,398.60 1530.83,396.95 1539.22,396.95 1547.61,396.95 1555.99,396.95 1564.38,396.95 1572.77,396.95 1581.16,396.95 1589.54,396.95 1597.93,396.95 1606.32,396.95 1614.71,396.95 1623.09,396.95 1631.48,396.95 1639.87,396.95 1648.25,396.95 1656.64,396.95 1665.03,396.95 1673.42,396.95 1681.80,396.95 1690.19,396.95 1698.58,396.95 1706.97,396.95 1715.35,396.95 1723.74,396.95 1732.13,396.95 1740.51,396.95 1748.90,396.95 1757.29,396.95 1765.68,396.95 1774.06,396.95 1782.45,396.95 1790.84,396.95 1799.23,396.95 1807.61,396.95 1816.00,396.95" fill="none" stroke="#4a9ee6" stroke-width="2"/>
<circle cx="365.00" cy="388.73" r="3" fill="#fff" stroke="#4a9ee6" stroke-width="2"/>
<circle cx="373.39" cy="388.73" r="3" fill="#fff" stroke="#4a9ee6" stroke-width="2"/>
<circle cx="381.77" cy="388.73" r="3" fill="#fff" stroke="#4a9ee6" stroke-width="2"/>
<circle cx="390.16" cy="388.73" r="3" fill="#fff" stroke="#4a9ee6" stroke-width="2"/>
<circle cx="398.55" cy="388.73" r="3" fill="#fff" stroke="#4a9ee6" stroke-width="2"/>
<circle cx="406.94" cy="388.73" r="3" fill="#fff" stroke="#4a9ee6" stroke-width="2"/>
<circle cx="415.32" cy="388.73" r="3" fill="#fff" stroke="#4a9ee6" stroke-width="2"/>
<circle cx="423.71" cy="388.73" r="3" fill="#fff" stroke="#4a9ee6" stroke-width="2"/>
<circle cx="432.10" cy="388.73" r="3" fill="#fff" stroke="#4a9ee6" stroke-width="2"/>
<circle cx="440.49" cy="390.37" r="3" fill="#fff" stroke="#4a9ee6" stroke-width="2"/>
<circle cx="448.87" cy="390.37" r="3" fill="#fff" stroke="#4a9ee6" stroke-width="2"/>
<circle cx="457.26" cy="390.37" r="3" fill="#fff" stroke="#4a9ee6" stroke-width="2"/>
<circle cx="465.65" cy="392.01" r="3" fill="#fff" stroke="#4a9ee6" stroke-width="2"/>
<circle cx="474.03" cy="392.01" r="3" fill="#fff" stroke="#4a9ee6" stroke-width="2"/>
<circle cx="482.42" cy="392.01" r="3" fill="#fff" stroke="#4a9ee6" stroke-width="2"/>
<circle cx="490.81" cy="392.01" r="3" fill="#fff" stroke="#4a9ee6" stroke-width="2"/>
<circle cx="499.20" cy="392.01" r="3" fill="#fff" stroke="#4a9ee6" stroke-width="2"/>
<circle cx="507.58" cy="393.66" r="3" fill="#fff" stroke="#4a9ee6" stroke-width="2"/>
<circle cx="515.97" cy="393.66" r="3" fill="#fff" stroke="#4a9ee6" stroke-width="2"/>
<circle cx="524.36" cy="393.66" r="3" fill="#fff" stroke="#4a9ee6" stroke-width="2"/>
<circle cx="532.75" cy="393.66" r="3" fill="#fff" stroke="#4a9ee6" stroke-width="2"/>
<circle cx="541.13" cy="393.66" r="3" fill="#fff" stroke="#4a9ee6" stroke-width="2"/>
<circle cx="549.52" cy="393.66" r="3" fill="#fff" stroke="#4a9ee6" stroke-width="2"/>
<circle cx="557.91" cy="395.31" r="3" fill="#fff" stroke="#4a9ee6" stroke-width="2"/>
<circle cx="566.29" cy="395.31" r="3" fill="#fff" stroke="#4a9ee6" stroke-width="2"/>
<circle cx="574.68" cy="395.31" r="3" fill="#fff" stroke="#4a9ee6" stroke-width="2"/>
<circle cx="583.07" cy="395.31" r="3" fill="#fff" stroke="#4a9ee6" stroke-width="2"/>
<circle cx="591.46" cy="396.95" r="3" fill="#fff" stroke="#4a9ee6" stroke-width="2"/>
<circle cx="599.84" cy="396.95" r="3" fill="#fff" stroke="#4a9ee6" stroke-width="2"/>
<circle cx="608.23" cy="396.95" r="3" fill="#fff" stroke="#4a9ee6" stroke-width="2"/>
<circle cx="616.62" cy="398.60" r="3" fill="#fff" stroke="#4a9ee6" stroke-width="2"/>
<circle cx="625.01" cy="398.60" r="3" fill="#fff" stroke="#4a9ee6" stroke-width="2"/>
<circle cx="633.39" cy="398.60" r="3" fill="#fff" stroke="#4a9ee6" stroke-width="2"/>
<circle cx="641.78" cy="398.60" r="3" fill="#fff" stroke="#4a9ee6" stroke-width="2"/>
<circle cx="650.17" cy="398.60" r="3" fill="#fff" stroke="#4a9ee6" stroke-width="2"/>
<circle cx="658.55" cy="398.60" r="3" fill="#fff" stroke="#4a9ee6" stroke-width="2"/>
<circle cx="666.94" cy="398.60" r="3" fill="#fff" stroke="#4a9ee6" stroke-width="2"/>
<circle cx="675.33" cy="398.60" r="3" fill="#fff" stroke="#4a9ee6" stroke-width="2"/>
<circle cx="683.72" cy="400.24" r="3" fill="#fff" stroke="#4a9ee6" stroke-width="2"/>
<circle cx="692.10" cy="400.24" r="3" fill="#fff" stroke="#4a9ee6" stroke-width="2"/>
<circle cx="700.49" cy="400.24" r="3" fill="#fff" stroke="#4a9ee6" stroke-width="2"/>
<circle cx="708.88" cy="400.24" r="3" fill="#fff" stroke="#4a9ee6" stroke-width="2"/>
<circle cx="717.27" cy="400.24" r="3" fill="#fff" stroke="#4a9ee6" stroke-width="2"/>
<circle cx="725.65" cy="400.24" r="3" fill="#fff" stroke="#4a9ee6" stroke-width="2"/>
<circle cx="734.04" cy="400.24" r="3" fill="#fff" stroke="#4a9ee6" stroke-width="2"/>
<circle cx="742.43" cy="400.24" r="3" fill="#fff" stroke="#4a9ee6" stroke-width="2"/>
<circle cx="750.82" cy="400.24" r="3" fill="#fff" stroke="#4a9ee6" stroke-width="2"/>
<circle cx="759.20" cy="400.24" r="3" fill="#fff" stroke="#4a9ee6" stroke-width="2"/>
<circle cx="767.59" cy="401.88" r="3" fill="#fff" stroke="#4a9ee6" stroke-width="2"/>
<circle cx="775.98" cy="401.88" r="3" fill="#fff" stroke="#4a9ee6" stroke-width="2"/>
<circle cx="784.36" cy="401.88" r="3" fill="#fff" stroke="#4a9ee6" stroke-width="2"/>
<circle cx="792.75" cy="403.53" r="3" fill="#fff" stroke="#4a9ee6" stroke-width="2"/>
<circle cx="801.14" cy="405.18" r="3" fill="#fff" stroke="#4a9ee6" stroke-width="2"/>
<circle cx="809.53" cy="405.18" r="3" fill="#fff" stroke="#4a9ee6" stroke-width="2"/>
<circle cx="817.91" cy="405.18" r="3" fill="#fff" stroke="#4a9ee6" stroke-width="2"/>
<circle cx="826.30" cy="405.18" r="3" fill="#fff" stroke="#4a9ee6" stroke-width="2"/>
<circle cx="834.69" cy="405.18" r="3" fill="#fff" stroke="#4a9ee6" stroke-width="2"/>
<circle cx="843.08" cy="405.18" r="3" fill="#fff" stroke="#4a9ee6" stroke-width="2"/>
<circle cx="851.46" cy="405.18" r="3" fill="#fff" stroke="#4a9ee6" stroke-width="2"/>
<circle cx="859.85" cy="405.18" r="3" fill="#fff" stroke="#4a9ee6" stroke-width="2"/>
<circle cx="868.24" cy="405.18" r="3" fill="#fff" stroke="#4a9ee6" stroke-width="2"/>
<circle cx="876.62" cy="405.18" r="3" fill="#fff" stroke="#4a9ee6" stroke-width="2"/>
<circle cx="885.01" cy="406.82" r="3" fill="#fff" stroke="#4a9ee6" stroke-width="2"/>
<circle cx="893.40" cy="406.82" r="3" fill="#fff" stroke="#4a9ee6" stroke-width="2"/>
<circle cx="901.79" cy="406.82" r="3" fill="#fff" stroke="#4a9ee6" stroke-width="2"/>
<circle cx="910.17" cy="406.82" r="3" fill="#fff" stroke="#4a9ee6" stroke-width="2"/>
<circle cx="918.56" cy="406.82" r="3" fill="#fff" stroke="#4a9ee6" stroke-width="2"/>
<circle cx="926.95" cy="406.82" r="3" fill="#fff" stroke="#4a9ee6" stroke-width="2"/>
<circle cx="935.34" cy="406.82" r="3" fill="#fff" stroke="#4a9ee6" stroke-width="2"/>
<circle cx="943.72" cy="406.82" r="3" fill="#fff" stroke="#4a9ee6" stroke-width="2"/>
<circle cx="952.11" cy="406.82" r="3" fill="#fff" stroke="#4a9ee6" stroke-width="2"/>
<circle cx="960.50" cy="406.82" r="3" fill="#fff" stroke="#4a9ee6" stroke-width="2"/>
<circle cx="968.88" cy="406.82" r="3" fill="#fff" stroke="#4a9ee6" stroke-width="2"/>
<circle cx="977.27" cy="406.82" r="3" fill="#fff" stroke="#4a9ee6" stroke-width="2"/>
<circle cx="985.66" cy="406.82" r="3" fill="#fff" stroke="#4a9ee6" stroke-width="2"/>
<circle cx="994.05" cy="406.82" r="3" fill="#fff" stroke="#4a9ee6" stroke-width="2"/>
<circle cx="1002.43" cy="406.82" r="3" fill="#fff" stroke="#4a9ee6" stroke-width="2"/>
<circle cx="1010.82" cy="406.82" r="3" fill="#fff" stroke="#4a9ee6" stroke-width="2"/>
<circle cx="1019.21" cy="406.82" r="3" fill="#fff" stroke="#4a9ee6" stroke-width="2"/>
<circle cx="1027.60" cy="406.82" r="3" fill="#fff" stroke="#4a9ee6" stroke-width="2"/>
<circle cx="1035.98" cy="406.82" r="3" fill="#fff" stroke="#4a9ee6" stroke-width="2"/>
<circle cx="1044.37" cy="406.82" r="3" fill="#fff" stroke="#4a9ee6" stroke-width="2"/>
<circle cx="1052.76" cy="406.82" r="3" fill="#fff" stroke="#4a9ee6" stroke-width="2"/>
<circle cx="1061.14" cy="406.82" r="3" fill="#fff" stroke="#4a9ee6" stroke-width="2"/>
<circle cx="1069.53" cy="406.82" r="3" fill="#fff" stroke="#4a9ee6" stroke-width="2"/>
<circle cx="1077.92" cy="406.82" r="3" fill="#fff" stroke="#4a9ee6" stroke-width="2"/>
<circle cx="1086.31" cy="406.82" r="3" fill="#fff" stroke="#4a9ee6" stroke-width="2"/>
<circle cx="1094.69" cy="406.82" r="3" fill="#fff" stroke="#4a9ee6" stroke-width="2"/>
<circle cx="1103.08" cy="406.82" r="3" fill="#fff" stroke="#4a9ee6" stroke-width="2"/>
<circle cx="1111.47" cy="406.82" r="3" fill="#fff" stroke="#4a9ee6" stroke-width="2"/>
<circle cx="1119.86" cy="406.82" r="3" fill="#fff" stroke="#4a9ee6" stroke-width="2"/>
<circle cx="1128.24" cy="405.18" r="3" fill="#fff" stroke="#4a9ee6" stroke-width="2"/>
<circle cx="1136.63" cy="405.18" r="3" fill="#fff" stroke="#4a9ee6" stroke-width="2"/>
<circle cx="1145.02" cy="405.18" r="3" fill="#fff" stroke="#4a9ee6" stroke-width="2"/>
<circle cx="1153.40" cy="405.18" r="3" fill="#fff" stroke="#4a9ee6" stroke-width="2"/>
<circle cx="1161.79" cy="405.18" r="3" fill="#fff" stroke="#4a9ee6" stroke-width="2"/>
<circle cx="1170.18" cy="403.53" r="3" fill="#fff" stroke="#4a9ee6" stroke-width="2"/>
<circle cx="1178.57" cy="403.53" r="3" fill="#fff" stroke="#4a9ee6" stroke-width="2"/>
<circle cx="1186.95" cy="401.88" r="3" fill="#fff" stroke="#4a9ee6" stroke-width="2"/>
<circle cx="1195.34" cy="401.88" r="3" fill="#fff" stroke="#4a9ee6" stroke-width="2"/>
<circle cx="1203.73" cy="401.88" r="3" fill="#fff" stroke="#4a9ee6" stroke-width="2"/>
<circle cx="1212.12" cy="401.88" r="3" fill="#fff" stroke="#4a9ee6" stroke-width="2"/>
<circle cx="1220.50" cy="401.88" r="3" fill="#fff" stroke="#4a9ee6" stroke-width="2"/>
<circle cx="1228.89" cy="401.88" r="3" fill="#fff" stroke="#4a9ee6" stroke-width="2"/>
<circle cx="1237.28" cy="401.88" r="3" fill="#fff" stroke="#4a9ee6" stroke-width="2"/>
<circle cx="1245.66" cy="401.88" r="3" fill="#fff" stroke="#4a9ee6" stroke-width="2"/>
<circle cx="1254.05" cy="401.88" r="3" fill="#fff" stroke="#4a9ee6" stroke-width="2"/>
<circle cx="1262.44" cy="401.88" r="3" fill="#fff" stroke="#4a9ee6" stroke-width="2"/>
<circle cx="1270.83" cy="401.88" r="3" fill="#fff" stroke="#4a9ee6" stroke-width="2"/>
<circle cx="1279.21" cy="401.88" r="3" fill="#fff" stroke="#4a9ee6" stroke-width="2"/>
<circle cx="1287.60" cy="401.88" r="3" fill="#fff" stroke="#4a9ee6" stroke-width="2"/>
<circle cx="1295.99" cy="401.88" r="3" fill="#fff" stroke="#4a9ee6" stroke-width="2"/>
<circle cx="1304.38" cy="400.24" r="3" fill="#fff" stroke="#4a9ee6" stroke-width="2"/>
<circle cx="1312.76" cy="400.24" r="3" fill="#fff" stroke="#4a9ee6" stroke-width="2"/>
<circle cx="1321.15" cy="400.24" r="3" fill="#fff" stroke="#4a9ee6" stroke-width="2"/>
<circle cx="1329.54" cy="400.24" r="3" fill="#fff" stroke="#4a9ee6" stroke-width="2"/>
<circle cx="1337.92" cy="400.24" r="3" fill="#fff" stroke="#4a9ee6" stroke-width="2"/>
<circle cx="1346.31" cy="400.24" r="3" fill="#fff" stroke="#4a9ee6" stroke-width="2"/>
<circle cx="1354.70" cy="400.24" r="3" fill="#fff" stroke="#4a9ee6" stroke-width="2"/>
<circle cx="1363.09" cy="400.24" r="3" fill="#fff" stroke="#4a9ee6" stroke-width="2"/>
<circle cx="1371.47" cy="398.60" r="3" fill="#fff" stroke="#4a9ee6" stroke-width="2"/>
<circle cx="1379.86" cy="398.60" r="3" fill="#fff" stroke="#4a9ee6" stroke-width="2"/>
<circle cx="1388.25" cy="398.60" r="3" fill="#fff" stroke="#4a9ee6" stroke-width="2"/>
<circle cx="1396.64" cy="398.60" r="3" fill="#fff" stroke="#4a9ee6" stroke-width="2"/>
<circle cx="1405.02" cy="398.60" r="3" fill="#fff" stroke="#4a9ee6" stroke-width="2"/>
<circle cx="1413.41" cy="398.60" r="3" fill="#fff" stroke="#4a9ee6" stroke-width="2"/>
<circle cx="1421.80" cy="398.60" r="3" fill="#fff" stroke="#4a9ee6" stroke-width="2"/>
<circle cx="1430.18" cy="398.60" r="3" fill="#fff" stroke="#4a9ee6" stroke-width="2"/>
<circle cx="1438.57" cy="398.60" r="3" fill="#fff" stroke="#4a9ee6" stroke-width="2"/>
<circle cx="1446.96" cy="398.60" r="3" fill="#fff" stroke="#4a9ee6" stroke-width="2"/>
<circle cx="1455.35" cy="398.60" r="3" fill="#fff" stroke="#4a9ee6" stroke-width="2"/>
<circle cx="1463.73" cy="398.60" r="3" fill="#fff" stroke="#4a9ee6" stroke-width="2"/>
<circle cx="1472.12" cy="398.60" r="3" fill="#fff" stroke="#4a9ee6" stroke-width="2"/>
<circle cx="1480.51" cy="398.60" r="3" fill="#fff" stroke="#4a9ee6" stroke-width="2"/>
<circle cx="1488.90" cy="398.60" r="3" fill="#fff" stroke="#4a9ee6" stroke-width="2"/>
<circle cx="1497.28" cy="398.60" r="3" fill="#fff" stroke="#4a9ee6" stroke-width="2"/>
<circle cx="1505.67" cy="398.60" r="3" fill="#fff" stroke="#4a9ee6" stroke-width="2"/>
<circle cx="1514.06" cy="398.60" r="3" fill="#fff" stroke="#4a9ee6" stroke-width="2"/>
<circle cx="1522.45" cy="398.60" r="3" fill="#fff" stroke="#4a9ee6" stroke-width="2"/>
<circle cx="1530.83" cy="396.95" r="3" fill="#fff" stroke="#4a9ee6" stroke-width="2"/>
<circle cx="1539.22" cy="396.95" r="3" fill="#fff" stroke="#4a9ee6" stroke-width="2"/>
<circle cx="1547.61" cy="396.95" r="3" fill="#fff" stroke="#4a9ee6" stroke-width="2"/>
<circle cx="1555.99" cy="396.95" r="3" fill="#fff" stroke="#4a9ee6" stroke-width="2"/>
<circle cx="1564.38" cy="396.95" r="3" fill="#fff" stroke="#4a9ee6" stroke-width="2"/>
<circle cx="1572.77" cy="396.95" r="3" fill="#fff" stroke="#4a9ee6" stroke-width="2"/>
<circle cx="1581.16" cy="396.95" r="3" fill="#fff" stroke="#4a9ee6" stroke-width="2"/>
<circle cx="1589.54" cy="396.95" r="3" fill="#fff" stroke="#4a9ee6" stroke-width="2"/>
<circle cx="1597.93" cy="396.95" r="3" fill="#fff" stroke="#4a9ee6" stroke-width="2"/>
<circle cx="1606.32" cy="396.95" r="3" fill="#fff" stroke="#4a9ee6" stroke-width="2"/>
<circle cx="1614.71" cy="396.95" r="3" fill="#fff" stroke="#4a9ee6" stroke-width="2"/>
<circle cx="1623.09" cy="396.95" r="3" fill="#fff" stroke="#4a9ee6" stroke-width="2"/>
<circle cx="1631.48" cy="396.95" r="3" fill="#fff" stroke="#4a9ee6" stroke-width="2"/>
<circle cx="1639.87" cy="396.95" r="3" fill="#fff" stroke="#4a9ee6" stroke-width="2"/>
<circle cx="1648.25" cy="396.95" r="3" fill="#fff" stroke="#4a9ee6" stroke-width="2"/>
<circle cx="1656.64" cy="396.95" r="3" fill="#fff" stroke="#4a9ee6" stroke-width="2"/>
<circle cx="1665.03" cy="396.95" r="3" fill="#fff" stroke="#4a9ee6" stroke-width="2"/>
<circle cx="1673.42" cy="396.95" r="3" fill="#fff" stroke="#4a9ee6" stroke-width="2"/>
<circle cx="1681.80" cy="396.95" r="3" fill="#fff" stroke="#4a9ee6" stroke-width="2"/>
<circle cx="1690.19" cy="396.95" r="3" fill="#fff" stroke="#4a9ee6" stroke-width="2"/>
<circle cx="1698.58" cy="396.95" r="3" fill="#fff" stroke="#4a9ee6" stroke-width="2"/>
<circle cx="1706.97" cy="396.95" r="3" fill="#fff" stroke="#4a9ee6" stroke-width="2"/>
<circle cx="1715.35" cy="396.95" r="3" fill="#fff" stroke="#4a9ee6" stroke-width="2"/>
<circle cx="1723.74" cy="396.95" r="3" fill="#fff" stroke="#4a9ee6" stroke-width="2"/>
<circle cx="1732.13" cy="396.95" r="3" fill="#fff" stroke="#4a9ee6" stroke-width="2"/>
<circle cx="1740.51" cy="396.95" r="3" fill="#fff" stroke="#4a9ee6" stroke-width="2"/>
<circle cx="1748.90" cy="396.95" r="3" fill="#fff" stroke="#4a9ee6" stroke-width="2"/>
<circle cx="1757.29" cy="396.95" r="3" fill="#fff" stroke="#4a9ee6" stroke-width="2"/>
<circle cx="1765.68" cy="396.95" r="3" fill="#fff" stroke="#4a9ee6" stroke-width="2"/>
<circle cx="1774.06" cy="396.95" r="3" fill="#fff" stroke="#4a9ee6" stroke-width="2"/>
<circle cx="1782.45" cy="396.95" r="3" fill="#fff" stroke="#4a9ee6" stroke-width="2"/>
<circle cx="1790.84" cy="396.95" r="3" fill="#fff" stroke="#4a9ee6" stroke-width="2"/>
<circle cx="1799.23" cy="396.95" r="3" fill="#fff" stroke="#4a9ee6" stroke-width="2"/>
<circle cx="1807.61" cy="396.95" r="3" fill="#fff" stroke="#4a9ee6" stroke-width="2"/>
<circle cx="1816.00" cy="396.95" r="3" fill="#fff" stroke="#4a9ee6" stroke-width="2"/>
<line x1="1737" x2="1768.5" y1="457" y2="457" stroke="#4a9ee6" stroke-width="2.5"/>
<circle cx="1753" cy="457" r="6.8" fill="#fff" stroke="#4a9ee6" stroke-width="2"/>
<text x="1775" y="463" font-family="Liberation Sans" font-size="18" fill="#333">数值</text>
<g fill="none" stroke="#707070" stroke-width="1.3"><path d="M1655 337.5 H1663 M1659 333 V342 M1666 337.5 H1674.5 V352.5 H1659.5 V345"/><path d="M1689.5 345 V352.5 H1705.5 V337.5 H1690.5 M1694.5 333.5 L1690 337.5 L1694.5 341.5"/><path d="M1721 341 H1724 L1727.5 331 L1730.5 348.5 L1733 339.5 L1734.5 344.5 H1740 M1721 352 H1740" /><path d="M1757.5 340 H1760 V349 H1757.5 Z M1763 336 H1766 V349 H1763 Z M1769 332.5 H1772 V349 H1769 Z M1756 352 H1774"/><path d="M1798.3 333 V348.5 M1790.5 340.5 L1798.3 348.5 L1806 340.5 M1790 347 V352.3 H1806.5 V347"/></g>
</svg>
<!--/CHART-->
</body></html>
